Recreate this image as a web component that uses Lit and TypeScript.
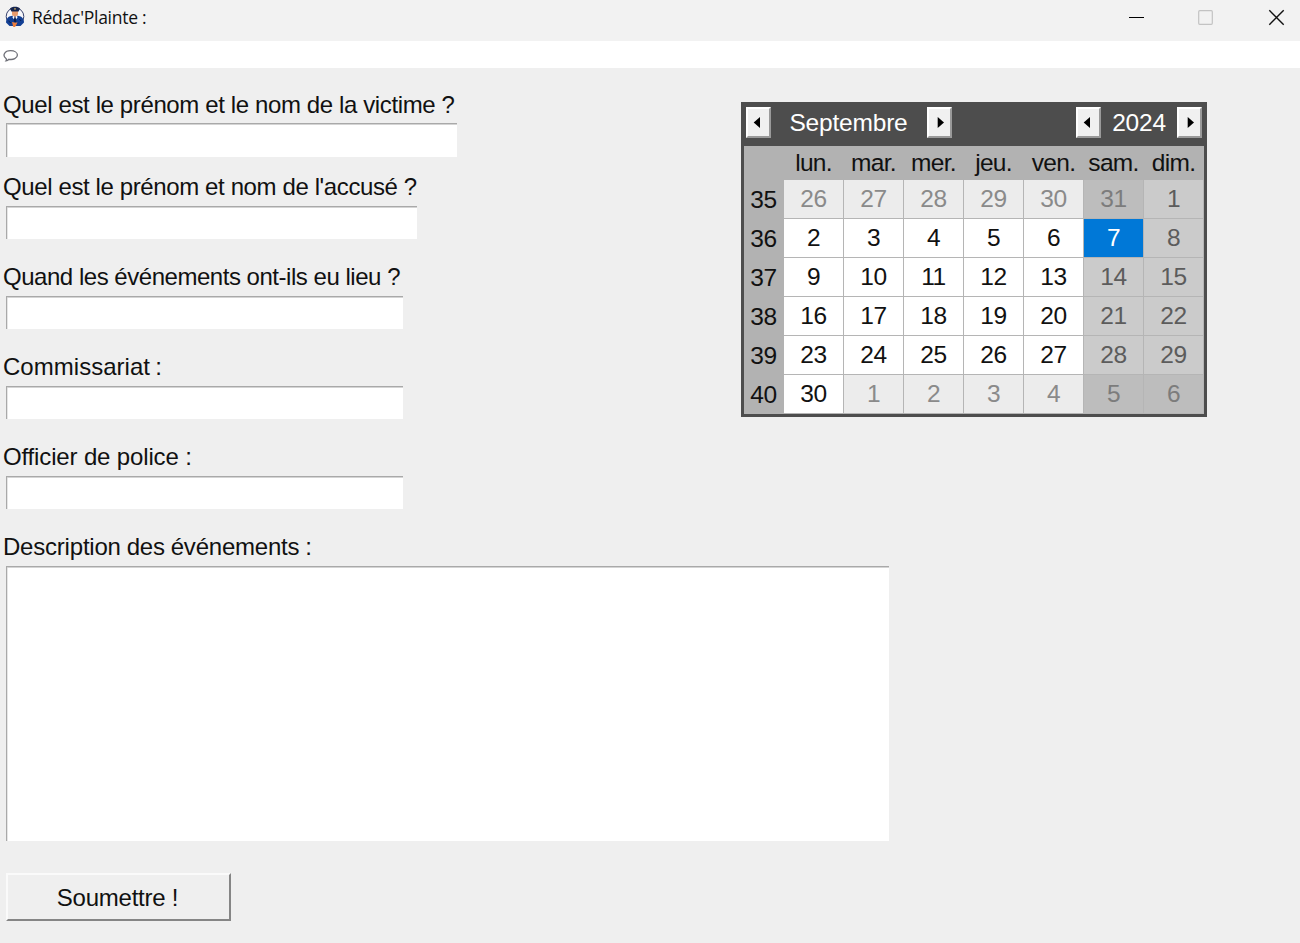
import { LitElement, html, svg, css } from "lit";
import { customElement } from "lit/decorators.js";
import { classMap } from "lit/directives/class-map.js";

const WEEKS: { n: number; days: number[] }[] = [
  { n: 35, days: [26, 27, 28, 29, 30, 31, 1] },
  { n: 36, days: [2, 3, 4, 5, 6, 7, 8] },
  { n: 37, days: [9, 10, 11, 12, 13, 14, 15] },
  { n: 38, days: [16, 17, 18, 19, 20, 21, 22] },
  { n: 39, days: [23, 24, 25, 26, 27, 28, 29] },
  { n: 40, days: [30, 1, 2, 3, 4, 5, 6] },
];
const DAY_NAMES = ["lun.", "mar.", "mer.", "jeu.", "ven.", "sam.", "dim."];

@customElement("month-calendar")
export class MonthCalendar extends LitElement {
  static styles = css`
    :host { display: block; width: 466px; height: 315px; box-sizing: border-box; background: #4d4d4d;
      padding: 0 3px 3px; color: #111; font: 24.5px/36px "Liberation Sans", Arial, sans-serif; letter-spacing: -0.4px; }
    .head { display: flex; height: 43.5px; align-items: flex-start; padding: 5px 2px 0 1.5px; box-sizing: border-box; color: #fff; }
    .step { width: 25px; height: 31px; flex: none; box-sizing: border-box; background: #f0f0f0; display: block; padding: 0;
      border: 2px solid; border-color: #fff #9a9a9a #9a9a9a #fff; }
    .step svg { display: block; }
    .month { width: 156px; text-align: center; line-height: 31px; letter-spacing: -0.2px; }
    .gap { flex: 1; }
    .year { width: 76px; text-align: center; line-height: 31px; letter-spacing: -0.2px; }
    .body { display: grid; grid-template-columns: 40px repeat(7, 60px); grid-template-rows: 34px repeat(6, 39px);
      background: #b2b2b2; height: 268.5px; width: 460px; overflow: hidden; }
    .dow { text-align: center; line-height: 33px; letter-spacing: -0.7px; padding-right: 1px; }
    .week { text-align: center; line-height: 40px; padding-right: 1px; }
    .day { background: #fff; border: solid #b5b5b5; border-width: 0 1px 1px 0; line-height: 38px; text-align: center; }
    .other { background: #ececec; color: #8a8a8a; }
    .weekend { background: #cbcbcb; color: #5c5c5c; }
    .weekend.other { background: #bdbdbd; color: #7c7c7c; }
    .selected { background: #0078d7; color: #fff; }
  `;

  private step(left: boolean) {
    return html`<button class="step" aria-label=${left ? "Précédent" : "Suivant"}>
      <svg width="21" height="27" viewBox="0 0 21 27">
        <path d=${left ? "M12 8v11L5.700 13.500z" : "M8.700 8v11l6.300-5.500z"} fill="#000" />
      </svg>
    </button>`;
  }

  render() {
    return html`
      <div class="head">
        ${this.step(true)}<span class="month">Septembre</span>${this.step(false)}
        <span class="gap"></span>
        ${this.step(true)}<span class="year">2024</span>${this.step(false)}
      </div>
      <div class="body">
        <span></span>${DAY_NAMES.map((d) => html`<span class="dow">${d}</span>`)}
        ${WEEKS.map((w, r) => html`<span class="week">${w.n}</span>${w.days.map((d, c) => {
          const other = (r === 0 && d > 7) || (r === 5 && d < 7);
          return html`<span class=${classMap({ day: true, other, weekend: c > 4, selected: r === 1 && d === 7 })}>${d}</span>`;
        })}`)}
      </div>`;
  }
}

const officer = svg`
  <circle cx="10" cy="10.500" r="8.800" fill="#f6f6fa" stroke="#34406b" stroke-width="1"/>
  <path d="M1 16.500c0-4.500 3-6.500 6.500-6.800h5c3.500.3 6.500 2.300 6.500 6.800l-3.500 3.500H4.500z" fill="#123f94"/>
  <path d="M7 5h6v2.800c0 2-1.300 3-3 3S7 9.800 7 7.800z" fill="#e89b6c"/>
  <path d="M5 2.600C7 .2 13 .2 15 2.600L13.600 5.600H6.400z" fill="#17264f"/>
  <path d="M8 9.600l2 2 2-2 .5 2-2.500 3-2.500-3z" fill="#fff"/>
  <path d="M9.300 11.200h1.400l.5 4-1.200 1.500L8.800 15z" fill="#0c1d49"/>
  <path d="M7 16l3.500.8 2-.5-1 2.200-1.500 2.500H8.300z" fill="#ed7d3b"/>
  <path d="M3.500 15l2.500 2M14.500 13l1.500 2" stroke="#0a2052" stroke-width="1"/>
  <circle cx="10" cy="2.900" r=".8" fill="#d8b45d"/>`;

@customElement("app-root")
export class AppRoot extends LitElement {
  static styles = css`
    :host { display: flex; flex-direction: column; width: 1300px; height: 943px; overflow: hidden; background: #efefef;
      color: #111; font: 24px/34px "Liberation Sans", Arial, sans-serif; }
    .title { height: 41px; flex: none; background: #f2f2f2; display: flex; align-items: flex-start; padding-left: 5px; box-sizing: border-box; }
    .logo { flex: none; margin: 6px 7px 0 0; display: block; }
    .name { flex: 1; font: 17.5px/34px "Open Sans", "Noto Sans", sans-serif; letter-spacing: -0.26px; color: #111; }
    .controls { flex: none; display: block; }
    .menu { height: 27px; flex: none; background: #fff; padding: 8px 0 0 3px; box-sizing: border-box; }
    .menu svg { display: block; }
    .main { display: flex; flex: 1; }
    .form { width: 741px; padding-top: 20px; display: flex; flex-direction: column; align-items: flex-start; }
    .side { padding-top: 34px; }
    .label { height: 35px; line-height: 32px; padding-left: 3px; white-space: nowrap; }
    .l1 { letter-spacing: -0.380px; line-height: 34px; }
    .l2 { letter-spacing: -0.385px; }
    .l3 { letter-spacing: -0.470px; }
    .l4 { letter-spacing: 0.030px; word-spacing: -1.500px; }
    .l5 { letter-spacing: -0.150px; }
    .l6 { letter-spacing: -0.210px; word-spacing: -0.500px; }
    .field { box-sizing: border-box; margin: 0 0 20px 6px; height: 33.500px; padding: 0 4px; background: #fff; border: solid #a9a9a9;
      border-width: 1px 0 0 1px; box-shadow: inset 0 1px #d4d4d4, inset 1px 0 #e6e6e6; outline: 0; border-radius: 0; font: inherit; display: block; resize: none; }
    .f1 { width: 451.400px; margin-bottom: 14px; }
    .f2 { width: 411px; margin-bottom: 21.500px; }
    .f3, .f4, .f5 { width: 397.400px; margin-bottom: 21.500px; }
    .area { width: 883px; height: 275.500px; margin-bottom: 31.500px; }
    .submit { margin-left: 6px; width: 225px; height: 48px; box-sizing: border-box; background: #efefef; border: solid;
      border-color: #fafafa #858585 #858585 #fafafa; border-width: 2px; font: inherit; color: inherit; padding: 3px 2px 0 0; letter-spacing: -0.25px; }
  `;

  render() {
    const fields = [
      "Quel est le prénom et le nom de la victime ?",
      "Quel est le prénom et nom de l'accusé ?",
      "Quand les événements ont-ils eu lieu ?",
      "Commissariat :",
      "Officier de police :",
    ];
    return html`
      <div class="title">
        <svg class="logo" width="20" height="22" viewBox="0 0 20 22">${officer}</svg>
        <span class="name">Rédac'Plainte :</span>
        <svg class="controls" width="180" height="35" viewBox="1120 0 180 35">
          <path d="M1129 17.500h15" stroke="#000" />
          <rect x="1198.700" y="10.700" width="13.600" height="13.600" rx="1" fill="none" stroke="#c3c3c3" stroke-width="1.200" />
          <path d="M1269.300 10.300l14.400 14.400M1283.700 10.300l-14.400 14.400" stroke="#111" stroke-width="1.400" />
        </svg>
      </div>
      <div class="menu">
        <svg width="17" height="16" viewBox="0 0 17 16">
          <path d="M3.200 9.800C-1.200 6.500 1.700 1.700 7.500 1.700c4 0 6.900 1.800 6.900 4.400 0 3.200-4.200 5-8.400 4.200-.8.900-1.800 1.500-3 1.500.5-.6.700-1.200.2-2z" fill="none" stroke="#6f7078" stroke-width="1.300" />
        </svg>
      </div>
      <div class="main">
        <div class="form">
          ${fields.map((t, i) => html`<label class="label l${i + 1}">${t}</label><input class="field f${i + 1}" />`)}
          <label class="label l6">Description des événements :</label><textarea class="field area"></textarea>
          <button class="submit">Soumettre !</button>
        </div>
        <div class="side"><month-calendar></month-calendar></div>
      </div>`;
  }
}
